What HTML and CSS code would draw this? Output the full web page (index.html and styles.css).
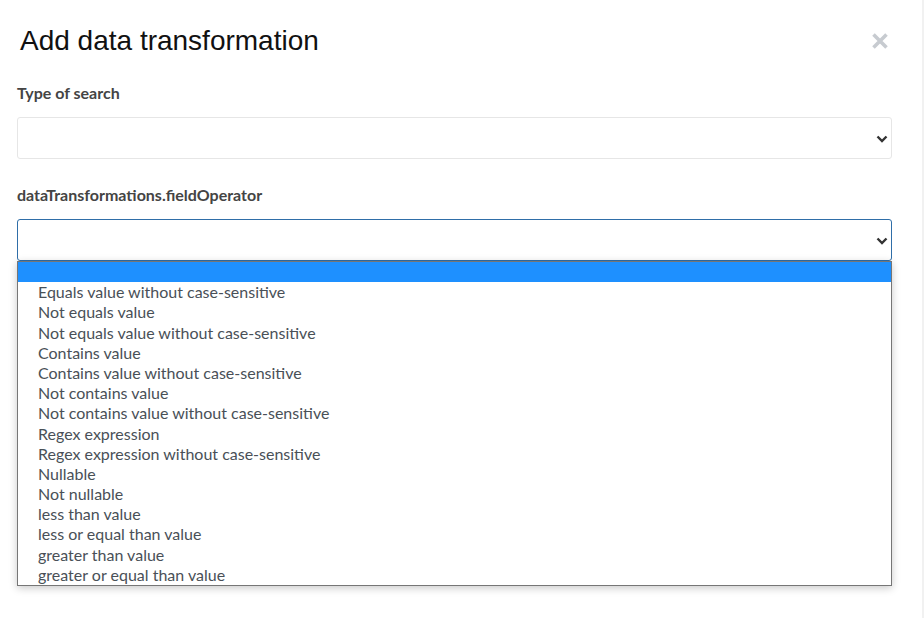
FILE: index.html
```html
<!DOCTYPE html>
<html lang="en">
<head>
<meta charset="utf-8">
<title>Add data transformation</title>
<link rel="stylesheet" href="styles.css">
</head>
<body>
<div class="page">
  <div class="modal">
    <div class="modal-header">
      <h4 class="modal-title">Add data transformation</h4>
      <button class="close" type="button" aria-label="Close">
        <svg width="18" height="18" viewBox="0 0 18 18"><path d="M2.5 2.5L15.5 15.5M15.5 2.5L2.5 15.5" stroke="#c7cbd0" stroke-width="3.6" fill="none"/></svg>
      </button>
    </div>
    <div class="modal-body">
      <div class="field">
        <label class="field-label">Type of search</label>
        <div class="select">
          <svg class="chevron" width="12" height="8" viewBox="0 0 12 8"><path d="M1.5 1.5L6 6L10.5 1.5" stroke="#333" stroke-width="2.4" fill="none"/></svg>
        </div>
      </div>
      <div class="field">
        <label class="field-label">dataTransformations.fieldOperator</label>
        <div class="select-wrap">
          <div class="select is-open">
            <svg class="chevron" width="12" height="8" viewBox="0 0 12 8"><path d="M1.5 1.5L6 6L10.5 1.5" stroke="#333" stroke-width="2.4" fill="none"/></svg>
          </div>
          <ul class="options">
            <li class="option is-active">&nbsp;</li>
            <li class="option">Equals value without case-sensitive</li>
            <li class="option">Not equals value</li>
            <li class="option">Not equals value without case-sensitive</li>
            <li class="option">Contains value</li>
            <li class="option">Contains value without case-sensitive</li>
            <li class="option">Not contains value</li>
            <li class="option">Not contains value without case-sensitive</li>
            <li class="option">Regex expression</li>
            <li class="option">Regex expression without case-sensitive</li>
            <li class="option">Nullable</li>
            <li class="option">Not nullable</li>
            <li class="option">less than value</li>
            <li class="option">less or equal than value</li>
            <li class="option">greater than value</li>
            <li class="option">greater or equal than value</li>
          </ul>
        </div>
      </div>
    </div>
  </div>
  <div class="scroll-edge"></div>
</div>
</body>
</html>
```
FILE: styles.css
```css
* { box-sizing: border-box; }

html, body {
  margin: 0;
  padding: 0;
  height: 100%;
}

body {
  font-family: Lato, "Open Sans", sans-serif;
  color: #444;
  background: #fff;
}

.page {
  display: flex;
  height: 618px;
}

.modal {
  width: 922px;
  background: #fff;
}

.scroll-edge {
  flex: 1;
  background: #f1f1f1;
}

.modal-header {
  display: flex;
  align-items: flex-start;
  justify-content: space-between;
  padding: 24px 33px 0 20px;
}

.modal-title {
  margin: 0;
  font-family: "Liberation Sans", Arial, sans-serif;
  font-weight: 400;
  font-size: 28px;
  line-height: 33.6px;
  color: #111;
}

.close {
  margin-top: 8px;
  padding: 0;
  border: 0;
  background: none;
  width: 18px;
  height: 18px;
  display: block;
}

.close svg { display: block; }

.modal-body {
  padding: 25px 30px 0 17px;
  display: flex;
  flex-direction: column;
  gap: 26px;
}

.field {
  display: flex;
  flex-direction: column;
  gap: 15px;
}

.field-label {
  font-weight: 700;
  font-size: 16px;
  line-height: 19.2px;
  color: #444;
}

.select {
  position: relative;
  height: 42px;
  border: 1px solid #e6e6e6;
  border-radius: 3px;
  background: #fff;
}

.select.is-open {
  border-color: #2f6ea8;
}

.chevron {
  position: absolute;
  right: 3px;
  top: 17px;
}

.select-wrap {
  position: relative;
}

.options {
  position: absolute;
  top: 42px;
  left: 0;
  right: 0;
  margin: 0;
  padding: 0;
  list-style: none;
  background: #fff;
  border: 1px solid #767676;
  box-shadow: 0 2px 8px rgba(0, 0, 0, 0.22);
}

.option {
  height: 20.2px;
  line-height: 20.2px;
  padding-left: 20px;
  font-size: 16px;
  color: #495057;
  white-space: nowrap;
}

.option.is-active {
  background: #1e90ff;
}
```
